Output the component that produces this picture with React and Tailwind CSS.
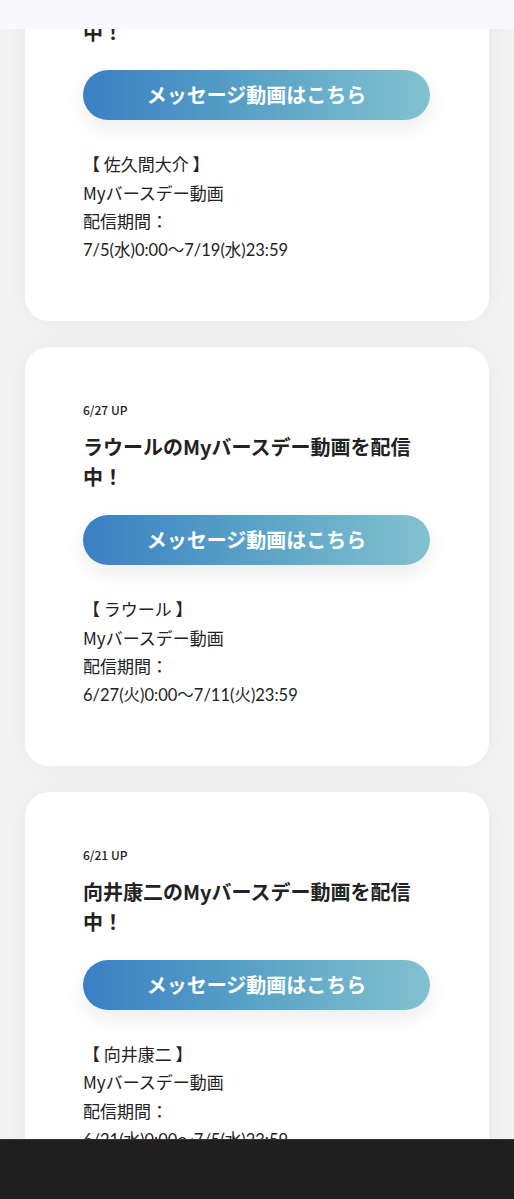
import React from "react";

const items = [
  {
    date: "7/5 UP",
    title: "佐久間大介のMyバースデー動画を配信中！",
    name: "【 佐久間大介 】",
    period: "7/5(水)0:00～7/19(水)23:59",
  },
  {
    date: "6/27 UP",
    title: "ラウールのMyバースデー動画を配信中！",
    name: "【 ラウール 】",
    period: "6/27(火)0:00～7/11(火)23:59",
  },
  {
    date: "6/21 UP",
    title: "向井康二のMyバースデー動画を配信中！",
    name: "【 向井康二 】",
    period: "6/21(水)0:00～7/5(水)23:59",
  },
];

function Card({ item }) {
  return (
    <div className="mx-[25px] rounded-[24px] bg-white pl-[58px] pr-[59px] pt-[55px] pb-[56px] shadow-[0_0_30px_rgba(0,0,0,0.05)]">
      <div className="text-[12px] leading-[16px] font-medium text-[#222]">{item.date}</div>
      <h2 className="mt-[14px] -mr-[8px] text-[20px] leading-[30px] font-bold text-[#222]">{item.title}</h2>
      <button className="mt-[23px] flex h-[50px] w-full items-center justify-center rounded-full bg-[linear-gradient(90deg,#3a7fc4_0%,#5aa3c6_50%,#82c1d0_100%)] text-[20px] font-bold text-white shadow-[0_8px_22px_rgba(0,0,0,0.08)]">
        メッセージ動画はこちら
      </button>
      <div className="mt-[30px] text-[17px] leading-[28.7px] text-[#222]">
        <div>{item.name}</div>
        <div>Myバースデー動画</div>
        <div>配信期間：</div>
        <div
          className="text-[16.5px]"
          style={{ fontFamily: 'Lato, "Noto Sans CJK JP", sans-serif' }}
        >
          {item.period}
        </div>
      </div>
    </div>
  );
}

export default function App() {
  return (
    <div
      className="relative min-h-[1199px] overflow-hidden bg-[#f3f3f3]"
      style={{ fontFamily: '"Noto Sans CJK JP", "Noto Sans", sans-serif' }}
    >
      <div className="-mt-[98px] flex flex-col gap-[26px] pb-[100px]">
        {items.map((it) => (
          <Card key={it.date} item={it} />
        ))}
      </div>
      <div className="fixed left-0 right-0 top-0 h-[29px] bg-[#f9f9fb]" />
      <div className="fixed bottom-0 left-0 right-0 h-[60px] border-t border-[#333] bg-[#1f1f1f]" />
    </div>
  );
}
